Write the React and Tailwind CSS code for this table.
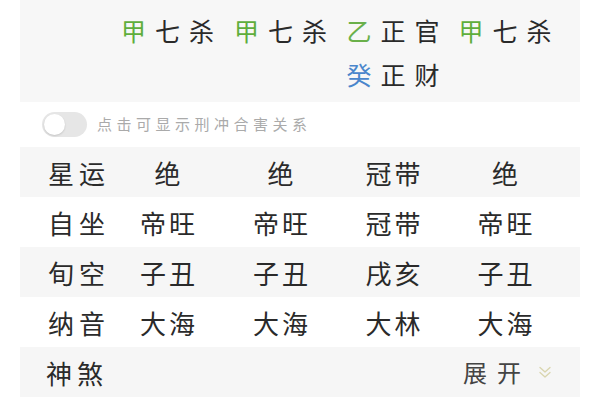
import React from "react";

const font = { fontFamily: '"Noto Sans CJK SC", "Noto Sans", sans-serif' };

const cols = "grid grid-cols-[91px_113px_113px_112px_112px]";

const topRows = [
  [
    { g: "甲", c: "text-[#5fae3c]", rest: "七杀" },
    { g: "甲", c: "text-[#5fae3c]", rest: "七杀" },
    { g: "乙", c: "text-[#6ab04a]", rest: "正官" },
    { g: "甲", c: "text-[#5fae3c]", rest: "七杀" },
  ],
  [null, null, { g: "癸", c: "text-[#4a86cc]", rest: "正财" }, null],
];

const rows = [
  { label: "星运", cells: ["绝", "绝", "冠带", "绝"], bg: "bg-[#f6f6f6]" },
  { label: "自坐", cells: ["帝旺", "帝旺", "冠带", "帝旺"], bg: "bg-white" },
  { label: "旬空", cells: ["子丑", "子丑", "戌亥", "子丑"], bg: "bg-[#f6f6f6]" },
  { label: "纳音", cells: ["大海", "大海", "大林", "大海"], bg: "bg-white" },
];

function Chevrons() {
  return (
    <svg width="16" height="16" viewBox="0 0 16 16" fill="none" stroke="#d9d5ae" strokeWidth="1.3" strokeLinecap="round" strokeLinejoin="round">
      <path d="M3 3.5 L8 8 L13 3.5" />
      <path d="M3 8.5 L8 13 L13 8.5" />
    </svg>
  );
}

export default function App() {
  return (
    <div className="w-[600px] h-[400px] overflow-hidden bg-white px-[20px]" style={font}>
      {/* top panel */}
      <div className="h-[102px] bg-[#f7f7f7] pt-[8px]">
        {topRows.map((r, i) => (
          <div key={i} className={cols + " h-[44px] items-center"}>
            <div />
            {r.map((cell, j) => (
              <div key={j} className="flex justify-center text-[25px] leading-[44px] tracking-[9px] text-[#2a2a2a] pl-[9px]">
                {cell && (
                  <span>
                    <span className={cell.c}>{cell.g}</span>
                    {cell.rest}
                  </span>
                )}
              </div>
            ))}
          </div>
        ))}
      </div>

      {/* toggle */}
      <div className="h-[45px] flex items-center pl-[22px] gap-[10px]">
        <div className="w-[45px] h-[25px] rounded-full bg-[#e6e6e6] flex items-center pl-[2px]">
          <div className="w-[21px] h-[21px] rounded-full bg-white shadow-[0_1px_2px_rgba(0,0,0,0.15)]" />
        </div>
        <span className="text-[15px] tracking-[4.5px] text-[#aaa]">点击可显示刑冲合害关系</span>
      </div>

      {/* table */}
      {rows.map((r) => (
        <div key={r.label} className={cols + " h-[50px] items-center text-[#2a2a2a] " + r.bg}>
          <div className="pl-[28px] text-[26px] tracking-[5px]">{r.label}</div>
          {r.cells.map((c, j) => (
            <div key={j} className="text-center text-[26px] tracking-[3px] pl-[3px]">
              {c}
            </div>
          ))}
        </div>
      ))}
      <div className="h-[50px] flex items-center justify-between bg-[#f6f6f6] text-[#2a2a2a]">
        <div className="pl-[26px] text-[26px] tracking-[5px]">神煞</div>
        <div className="flex items-center pr-[27px] gap-[6px]">
          <span className="text-[24px] tracking-[10px] text-[#444]">展开</span>
          <Chevrons />
        </div>
      </div>
    </div>
  );
}
